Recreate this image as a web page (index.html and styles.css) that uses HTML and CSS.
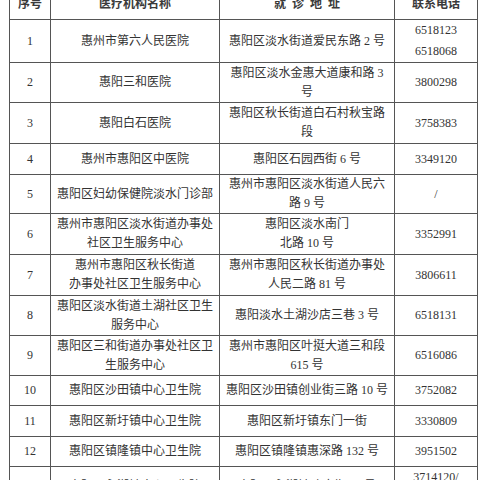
FILE: index.html
```html
<!DOCTYPE html>
<html lang="zh-CN">
<head>
<meta charset="utf-8">
<title>医疗机构名录</title>
<link rel="stylesheet" href="styles.css">
</head>
<body>
<div class="page">
<table class="list">
  <colgroup>
    <col class="c-no">
    <col class="c-name">
    <col class="c-addr">
    <col class="c-tel">
  </colgroup>
  <thead>
    <tr class="h-head">
      <th>序号</th>
      <th>医疗机构名称</th>
      <th><span class="spaced">就诊地址</span></th>
      <th>联系电话</th>
    </tr>
  </thead>
  <tbody>
    <tr class="h40">
      <td class="num">1</td>
      <td>惠州市第六人民医院</td>
      <td>惠阳区淡水街道爱民东路 2 号</td>
      <td class="num tall">6518123<br>6518068</td>
    </tr>
    <tr class="h40">
      <td class="num">2</td>
      <td>惠阳三和医院</td>
      <td>惠阳区淡水金惠大道康和路 3<br>号</td>
      <td class="num">3800298</td>
    </tr>
    <tr class="h41">
      <td class="num">3</td>
      <td>惠阳白石医院</td>
      <td>惠阳区秋长街道白石村秋宝路<br>段</td>
      <td class="num">3758383</td>
    </tr>
    <tr class="h31">
      <td class="num">4</td>
      <td>惠州市惠阳区中医院</td>
      <td>惠阳区石园西街 6 号</td>
      <td class="num">3349120</td>
    </tr>
    <tr class="h39">
      <td class="num">5</td>
      <td>惠阳区妇幼保健院淡水门诊部</td>
      <td>惠州市惠阳区淡水街道人民六<br>路 9 号</td>
      <td class="num">/</td>
    </tr>
    <tr class="h41">
      <td class="num">6</td>
      <td>惠州市惠阳区淡水街道办事处<br>社区卫生服务中心</td>
      <td>惠阳区淡水南门<br>北路 10 号</td>
      <td class="num">3352991</td>
    </tr>
    <tr class="h41">
      <td class="num">7</td>
      <td>惠州市惠阳区秋长街道<br>办事处社区卫生服务中心</td>
      <td>惠州市惠阳区秋长街道办事处<br>人民二路 81 号</td>
      <td class="num">3806611</td>
    </tr>
    <tr class="h40">
      <td class="num">8</td>
      <td>惠阳区淡水街道土湖社区卫生<br>服务中心</td>
      <td>惠阳淡水土湖沙店三巷 3 号</td>
      <td class="num">6518131</td>
    </tr>
    <tr class="h40">
      <td class="num">9</td>
      <td>惠阳区三和街道办事处社区卫<br>生服务中心</td>
      <td>惠州市惠阳区叶挺大道三和段<br>615 号</td>
      <td class="num">6516086</td>
    </tr>
    <tr class="h30">
      <td class="num">10</td>
      <td>惠阳区沙田镇中心卫生院</td>
      <td>惠阳区沙田镇创业街三路 10 号</td>
      <td class="num">3752082</td>
    </tr>
    <tr class="h31">
      <td class="num">11</td>
      <td>惠阳区新圩镇中心卫生院</td>
      <td>惠阳区新圩镇东门一街</td>
      <td class="num">3330809</td>
    </tr>
    <tr class="h30">
      <td class="num">12</td>
      <td>惠阳区镇隆镇中心卫生院</td>
      <td>惠阳区镇隆镇惠深路 132 号</td>
      <td class="num">3951502</td>
    </tr>
    <tr class="h40">
      <td class="num">13</td>
      <td>惠阳区永湖镇中心卫生院</td>
      <td>惠阳区永湖镇政府街 13 号</td>
      <td class="num">3714120/<br>3714288</td>
    </tr>
  </tbody>
</table>
</div>
</body>
</html>
```

FILE: styles.css
```css
html, body {
  margin: 0;
  padding: 0;
  background: #ffffff;
}

.page {
  padding-left: 9px;
  height: 480px;
  overflow: hidden;
}

.list {
  margin-top: -15px;
  width: 468px;
  table-layout: fixed;
  border-collapse: collapse;
  font-family: "Liberation Serif", "Noto Sans CJK SC", serif;
  font-size: 12px;
  line-height: 19px;
  color: #333333;
}

.c-no { width: 41px; }
.c-name { width: 169px; }
.c-addr { width: 175px; }
.c-tel { width: 83px; }

.list th,
.list td {
  border: 1px solid #555555;
  padding: 0 3px;
  text-align: center;
  vertical-align: middle;
  white-space: nowrap;
}

.list th {
  font-family: "Noto Sans CJK SC", sans-serif;
  font-weight: bold;
  color: #3a3a3a;
}

.spaced {
  letter-spacing: 6px;
  margin-right: -6px;
}

.num {
  font-family: "Liberation Serif", serif;
}

.tall {
  line-height: 21px;
}

.h-head { height: 34px; }
.h30 { height: 30px; }
.h31 { height: 31px; }
.h39 { height: 39px; }
.h40 { height: 40px; }
.h41 { height: 41px; }
```
